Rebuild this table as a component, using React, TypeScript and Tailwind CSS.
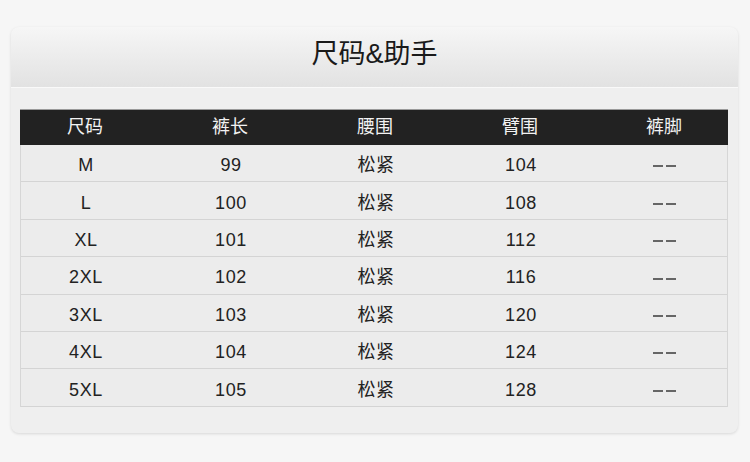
import React from "react";

const rows = [
  ["M", "99", "松紧", "104", "——"],
  ["L", "100", "松紧", "108", "——"],
  ["XL", "101", "松紧", "112", "——"],
  ["2XL", "102", "松紧", "116", "——"],
  ["3XL", "103", "松紧", "120", "——"],
  ["4XL", "104", "松紧", "124", "——"],
  ["5XL", "105", "松紧", "128", "——"],
];

const heads = ["尺码", "裤长", "腰围", "臂围", "裤脚"];

const font = { fontFamily: '"Liberation Sans", "Noto Sans CJK SC", sans-serif' };

export default function App() {
  return (
    <div className="w-[750px] h-[462px] bg-[#f6f6f6] pt-[27px] pl-[11px]" style={font}>
      <div className="w-[727px] h-[406px] rounded-[8px] bg-[#efefef] shadow-[0_1px_3px_rgba(0,0,0,0.12)] overflow-hidden flex flex-col">
        <div className="h-[61px] shrink-0 bg-gradient-to-b from-[#f6f6f6] to-[#e2e2e2] flex items-center justify-center border-b border-[#f9f9f9]">
          <span className="text-[27px] text-[#1a1a1a] leading-none mt-[-6px]">尺码&amp;助手</span>
        </div>
        <div className="pt-[21px] pl-[9px]">
          <div className="w-[708px] border-t border-[#9a9a9a]">
            <div className="grid grid-cols-[130px_145px_145px_145px_1fr] h-[35px] bg-[#222222] text-[#f2f2f2] text-[18px] items-center">
              {heads.map((h, i) => (
                <div key={i} className={i === 0 ? "text-center" : "text-center pl-[15px]"}>
                  {h}
                </div>
              ))}
            </div>
            <div className="border-l border-r border-[#d6d6d6] bg-[#ececec]">
              {rows.map((r, ri) => (
                <div
                  key={ri}
                  className="grid grid-cols-[130px_145px_145px_145px_1fr] h-[37.4px] pt-[5px] items-center border-b border-[#d4d4d4] text-[18px] tracking-[0.6px] text-[#222]"
                >
                  {r.map((c, ci) => (
                    <div key={ci} className={ci === 0 ? "text-center" : "text-center pl-[15px]"}>
                      {ci === 4 ? (
                        <span className="inline-flex gap-[3px] items-center align-middle">
                          <span className="w-[10px] h-[2px] bg-[#666]" />
                          <span className="w-[10px] h-[2px] bg-[#666]" />
                        </span>
                      ) : (
                        c
                      )}
                    </div>
                  ))}
                </div>
              ))}
            </div>
          </div>
        </div>
      </div>
    </div>
  );
}
